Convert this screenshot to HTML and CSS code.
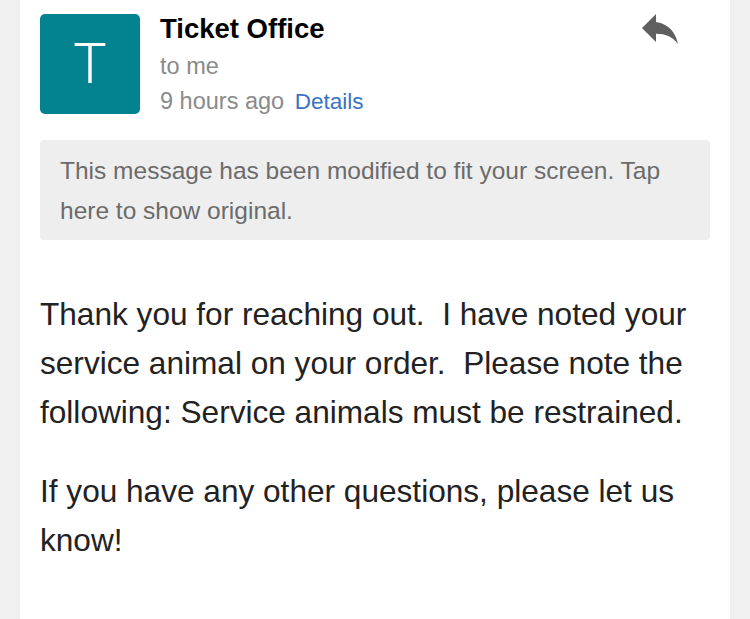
FILE: index.html
```html
<!DOCTYPE html>
<html>
<head>
<meta charset="utf-8">
<link rel="stylesheet" href="styles.css">
</head>
<body>
<div class="card">
  <div class="header">
    <div class="avatar">T</div>
    <div class="meta">
      <div class="name">Ticket Office</div>
      <div class="to">to me</div>
      <div class="time">9 hours ago <span class="details">Details</span></div>
    </div>
    <div class="reply">
      <svg width="48" height="48" viewBox="0 0 24 24"><path d="M10 9V5l-7 7 7 7v-4.1c5 0 8.5 1.6 11 5.1-1-5-4-10-11-11z" fill="#5f5f5f"/></svg>
    </div>
  </div>
  <div class="notice">This message has been modified to fit your screen. Tap here to show original.</div>
  <div class="body">
    <p>Thank you for reaching out.&nbsp; I have noted your service animal on your order.&nbsp; Please note the following: Service animals must be restrained.</p>
    <p>If you have any other questions, please let us know!</p>
  </div>
</div>
</body>
</html>
```
FILE: styles.css
```css
html, body {
  margin: 0;
  padding: 0;
  background: #f0f0f0;
  height: 100%;
}
body {
  font-family: "Liberation Sans", Arial, sans-serif;
}
.card {
  margin: 0 20px;
  background: #fff;
  min-height: 100%;
  padding: 14px 20px 0 20px;
  box-sizing: border-box;
}
.header {
  display: flex;
  position: relative;
}
.avatar {
  width: 100px;
  height: 100px;
  border-radius: 5px;
  background: #03838f;
  color: #fff;
  font-family: Roboto, sans-serif;
  font-weight: 300;
  font-size: 56px;
  display: flex;
  align-items: center;
  justify-content: center;
  flex-shrink: 0;
}
.meta {
  margin-left: 20px;
  flex: 1;
}
.name {
  font-weight: bold;
  font-size: 27.5px;
  line-height: 30px;
  color: #000;
}
.to, .time {
  font-size: 23.5px;
  color: #8a8a8a;
  line-height: 34px;
}
.to { margin-top: 5px; }
.time { margin-top: 1px; }
.details {
  color: #3a72c4;
  font-size: 22.5px;
  margin-left: 4px;
}
.reply {
  position: absolute;
  right: 26px;
  top: -10px;
}
.notice {
  margin-top: 21px;
  background: #eeeeee;
  border-radius: 4px;
  padding: 11px 20px 9px 20px;
  font-size: 24.5px;
  line-height: 40px;
  color: #6b6b6b;
}
.body {
  padding-top: 50px;
  color: #222;
  font-size: 31.6px;
  line-height: 49px;
}
.body p {
  margin: 0 0 30px 0;
}
```
